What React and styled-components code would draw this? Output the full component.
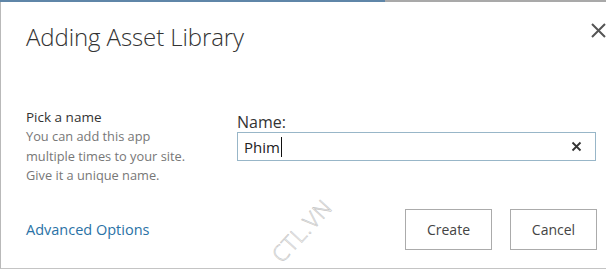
import React from "react";
import styled, { createGlobalStyle } from "styled-components";

const Global = createGlobalStyle`
  html, body {
    margin: 0;
    padding: 0;
    background: #ffffff;
  }
  body {
    width: 606px;
    height: 270px;
    overflow: hidden;
    font-family: "Open Sans", "Noto Sans", sans-serif;
  }
`;

export default function App() {
  return (
    <>
      <Global />
      <TopStrip>
        <StripPart $color="#5f86a8" $width="385px" />
        <StripPart $color="#a9a9a9" />
      </TopStrip>
      <Dialog>
        <Header>
          <Title>Adding Asset Library</Title>
          <CloseBtn aria-label="Close">
            <svg width="17" height="17" viewBox="0 0 17 17">
              <path
                d="M2 2 L15 15 M15 2 L2 15"
                stroke="#555"
                strokeWidth="2"
                fill="none"
              />
            </svg>
          </CloseBtn>
        </Header>

        <Body>
          <Info>
            <InfoTitle>Pick a name</InfoTitle>
            <InfoText>
              You can add this app
              <br />
              multiple times to your site.
              <br />
              Give it a unique name.
            </InfoText>
          </Info>
          <Field>
            <Label>Name:</Label>
            <InputBox>
              <Value>
                Phim
                <Caret />
              </Value>
              <ClearBtn aria-label="Clear">
                <svg width="11" height="11" viewBox="0 0 11 11">
                  <path
                    d="M1.5 1.5 L9.5 9.5 M9.5 1.5 L1.5 9.5"
                    stroke="#333"
                    strokeWidth="1.8"
                    fill="none"
                  />
                </svg>
              </ClearBtn>
            </InputBox>
          </Field>
        </Body>

        <Footer>
          <AdvLink href="#">Advanced Options</AdvLink>
          <Watermark>CTL.VN</Watermark>
          <Buttons>
            <Btn>Create</Btn>
            <Btn>Cancel</Btn>
          </Buttons>
        </Footer>
      </Dialog>
    </>
  );
}

const TopStrip = styled.div`
  display: flex;
  height: 2px;
`;

const StripPart = styled.div`
  background: ${(p) => p.$color};
  width: ${(p) => p.$width || "auto"};
  flex: ${(p) => (p.$width ? "none" : "1")};
`;

const Dialog = styled.div`
  position: relative;
  height: 266px;
  border-left: 1px solid #b9b9b9;
  border-bottom: 1px solid #c4c4c4;
  display: flex;
  flex-direction: column;
`;

const Header = styled.div`
  display: flex;
  justify-content: space-between;
  align-items: flex-start;
  padding: 18px 0 0 25px;
  height: 60px;
`;

const Title = styled.h1`
  margin: 0;
  font-size: 24px;
  font-weight: 300;
  color: #333;
  letter-spacing: -0.1px;
`;

const CloseBtn = styled.button`
  border: none;
  background: none;
  padding: 0;
  margin: 2px -1px 0 0;
  width: 17px;
  display: flex;
  cursor: pointer;
`;

const Body = styled.div`
  display: grid;
  grid-template-columns: 211px 359px;
  padding: 27px 0 0 25px;
  height: 101px;
`;

const Info = styled.div`
  display: flex;
  flex-direction: column;
`;

const InfoTitle = styled.div`
  font-size: 13.5px;
  color: #333;
  line-height: 20px;
`;

const InfoText = styled.div`
  font-size: 12.8px;
  color: #777;
  line-height: 19.5px;
`;

const Field = styled.div`
  display: flex;
  flex-direction: column;
  padding-top: 5px;
`;

const Label = styled.label`
  font-size: 16px;
  color: #333;
  line-height: 20px;
`;

const InputBox = styled.div`
  margin-top: 0;
  height: 27px;
  border: 1px solid #98b6c8;
  display: flex;
  align-items: center;
  justify-content: space-between;
  padding: 0 13px 0 6px;
`;

const Value = styled.span`
  font-size: 15px;
  color: #222;
  display: flex;
  align-items: center;
`;

const Caret = styled.span`
  display: inline-block;
  width: 1px;
  height: 20px;
  background: #111;
  margin-left: 1px;
`;

const ClearBtn = styled.button`
  border: none;
  background: none;
  padding: 0;
  display: flex;
`;

const Footer = styled.div`
  position: relative;
  display: flex;
  align-items: center;
  justify-content: space-between;
  padding: 0 9px 0 25px;
  height: 42px;
`;

const AdvLink = styled.a`
  font-size: 14.5px;
  color: #2a72a6;
  text-decoration: none;
`;

const Watermark = styled.span`
  position: absolute;
  left: 262px;
  top: 8px;
  transform: rotate(-47deg);
  transform-origin: center;
  font-size: 22px;
  font-weight: 300;
  line-height: 28px;
  white-space: nowrap;
  color: transparent;
  -webkit-text-stroke: 0.6px #c4c4c4;
  letter-spacing: 1px;
`;

const Buttons = styled.div`
  display: flex;
  gap: 18px;
`;

const Btn = styled.button`
  width: 87px;
  height: 41px;
  background: #fff;
  border: 1px solid #ababab;
  font-family: "Open Sans", "Noto Sans", sans-serif;
  font-size: 14px;
  color: #444;
  cursor: pointer;
`;
